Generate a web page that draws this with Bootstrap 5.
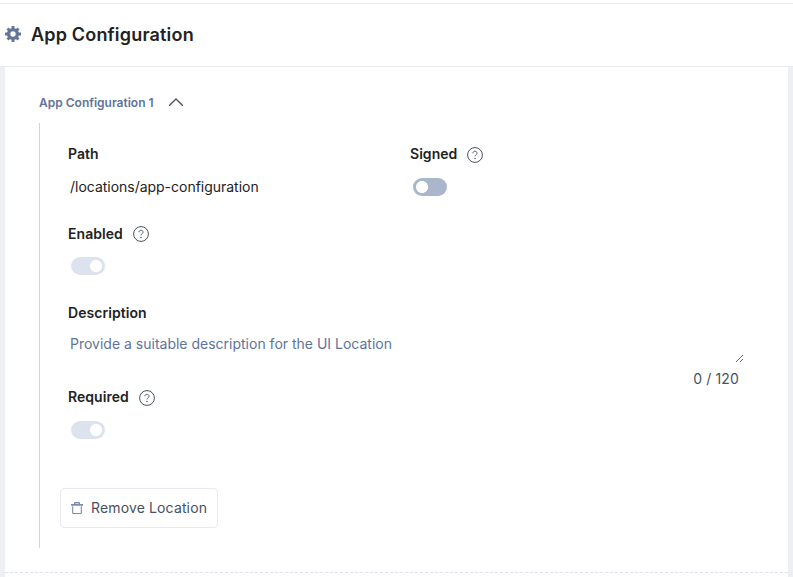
<!DOCTYPE html>
<html lang="en">
<head>
<meta charset="utf-8">
<meta name="viewport" content="width=device-width, initial-scale=1">
<title>App Configuration</title>
<link href="https://cdn.jsdelivr.net/npm/bootstrap@5.3.0/dist/css/bootstrap.min.css" rel="stylesheet">
<style>
body{font-family:Inter,"Liberation Sans",sans-serif;font-size:14px;line-height:20px;color:#222;background:#edeff5;height:577px;overflow:hidden}
.top-strip{height:3px}
.page-head{height:64px;border-top:1px solid #e9e9ee;border-bottom:1px solid #e9e9f5;padding-left:5px}
.page-head svg{margin-bottom:2px}
.page-head h1{font-size:18px;font-weight:600;line-height:24px;letter-spacing:.18px;margin-left:10px}
.panel{margin:0 5px;height:510px;padding:26px 34px 0}
.loc-toggle{font-size:12px;font-weight:600;color:#60749b;gap:15px;height:20px}
.loc-toggle svg{margin-bottom:2px}
.loc-body{border-left:1px solid #d3d3d8;margin-top:10px;height:425px;padding:21px 10px 0 28px}
.field-label{font-size:14px;font-weight:600;letter-spacing:.05px;color:#222;height:20px;gap:10px}
.path-row{height:80px}
.col-path{width:342px}
.field-text{letter-spacing:-.02px;margin:13px 0 0 2px}
.form-switch.switch-sm{min-height:18px;height:18px;padding:0;margin:13px 0 0 3px;line-height:0}
.form-switch.switch-sm.switch-low{margin-top:14px}
.help-low{margin-top:2px}
.switch-sm .form-check-input{float:none;display:block;margin:0;width:34px;height:18px;border:0;opacity:1;background-color:#a9b6cb;background-image:radial-gradient(circle at 9px 9px,#fff 5.7px,transparent 6.3px);background-size:34px 18px;background-position:0 0}
.switch-sm .form-check-input:checked{background-color:#dde3ee;background-image:radial-gradient(circle at 25px 9px,#fff 5.7px,transparent 6.3px);background-position:0 0}
.enabled-row{height:79px}
.desc-row{height:84px}
.desc-input{height:32px;margin-top:11px;padding:0 0 3px 2px;color:#60749b}
.counter{color:#475161;letter-spacing:.14px;margin-top:3px;padding-right:5px}
.required-row{height:101px}
.btn.btn-remove{height:40px;width:158px;margin-left:-8px;padding:0 10px;border:1px solid #e9e9f5;border-radius:4px;background:#fff;color:#475161;font-size:14px;line-height:20px;letter-spacing:.14px;gap:8px;white-space:nowrap}
.btn-remove span{margin-bottom:1px}
.dash-rule{height:1px;margin:24px -34px 0;background:repeating-linear-gradient(90deg,#dde3f0 0 3px,transparent 3px 5px)}
svg{display:block;flex:none}
</style>
</head>
<body>
<svg width="0" height="0" class="d-none" aria-hidden="true">
  <symbol id="help" viewBox="0 0 16 16"><circle cx="8" cy="8" r="7.4" fill="none" stroke="#475161" stroke-width="1"/><path d="M5.9 6.3C5.9 5 6.8 4.3 8 4.3s2.1.8 2.1 1.9c0 1.5-2.1 1.5-2.1 3.2" fill="none" stroke="#475161" stroke-width=".9"/><circle cx="8" cy="11.5" r=".75" fill="#475161"/></symbol>
</svg>
<div class="top-strip bg-white"></div>
<header class="page-head bg-white d-flex align-items-center">
  <svg width="16" height="16" viewBox="0 0 16 16"><circle cx="8" cy="8" r="4.4" fill="none" stroke="#647696" stroke-width="3.4"/><path d="M8 0v3M8 13v3M0 8h3M13 8h3M2.5 2.5l2 2M11.5 11.5l2 2M2.5 13.5l2-2M11.5 4.5l2-2" fill="none" stroke="#647696" stroke-width="2.9"/></svg>
  <h1 class="mb-0">App Configuration</h1>
</header>
<main class="panel bg-white">
  <div class="loc-toggle d-flex align-items-center">
    <span>App Configuration 1</span>
    <svg width="14" height="8" viewBox="0 0 14 8"><path d="M.6 7.3 7 1l6.4 6.3" fill="none" stroke="#475161" stroke-width="1.3" stroke-linecap="round" stroke-linejoin="round"/></svg>
  </div>
  <section class="loc-body">
    <div class="path-row d-flex">
      <div class="col-path">
        <div class="field-label">Path</div>
        <div class="field-text">/locations/app-configuration</div>
      </div>
      <div>
        <div class="field-label d-flex align-items-center"><span>Signed</span><svg class="help-low" width="16" height="16"><use href="#help"/></svg></div>
        <div class="form-check form-switch switch-sm switch-low"><input class="form-check-input" type="checkbox" role="switch" aria-label="Signed"></div>
      </div>
    </div>
    <div class="enabled-row">
      <div class="field-label d-flex align-items-center"><span>Enabled</span><svg width="16" height="16"><use href="#help"/></svg></div>
      <div class="form-check form-switch switch-sm"><input class="form-check-input" type="checkbox" role="switch" aria-label="Enabled" checked disabled></div>
    </div>
    <div class="desc-row">
      <div class="field-label">Description</div>
      <div class="desc-input d-flex justify-content-between align-items-start">
        <span>Provide a suitable description for the UI Location</span>
        <svg class="align-self-end" width="9" height="9" viewBox="0 0 9 9"><path d="M1 8 8 1M5 8l3-3" fill="none" stroke="#555" stroke-width=".9"/></svg>
      </div>
      <div class="counter text-end">0 / 120</div>
    </div>
    <div class="required-row">
      <div class="field-label d-flex align-items-center"><span>Required</span><svg class="help-low" width="16" height="16"><use href="#help"/></svg></div>
      <div class="form-check form-switch switch-sm switch-low"><input class="form-check-input" type="checkbox" role="switch" aria-label="Required" checked disabled></div>
    </div>
    <button type="button" class="btn btn-remove d-flex align-items-center"><svg width="12" height="12" viewBox="0 0 12 12"><path d="M0 2h3V.9Q3 0 3.9 0h4.2Q9 0 9 .9V2h3v1.8H0z" fill="#7b8bab"/><path d="M4.3 1.5h3.4" stroke="#dde3ee" stroke-width=".8"/><path d="M1.7 4.3v6.4q0 .8.8.8h7q.8 0 .8-.8V4.3" fill="none" stroke="#7b8bab" stroke-width="1.1"/></svg><span>Remove Location</span></button>
  </section>
  <div class="dash-rule"></div>
</main>
</body>
</html>
